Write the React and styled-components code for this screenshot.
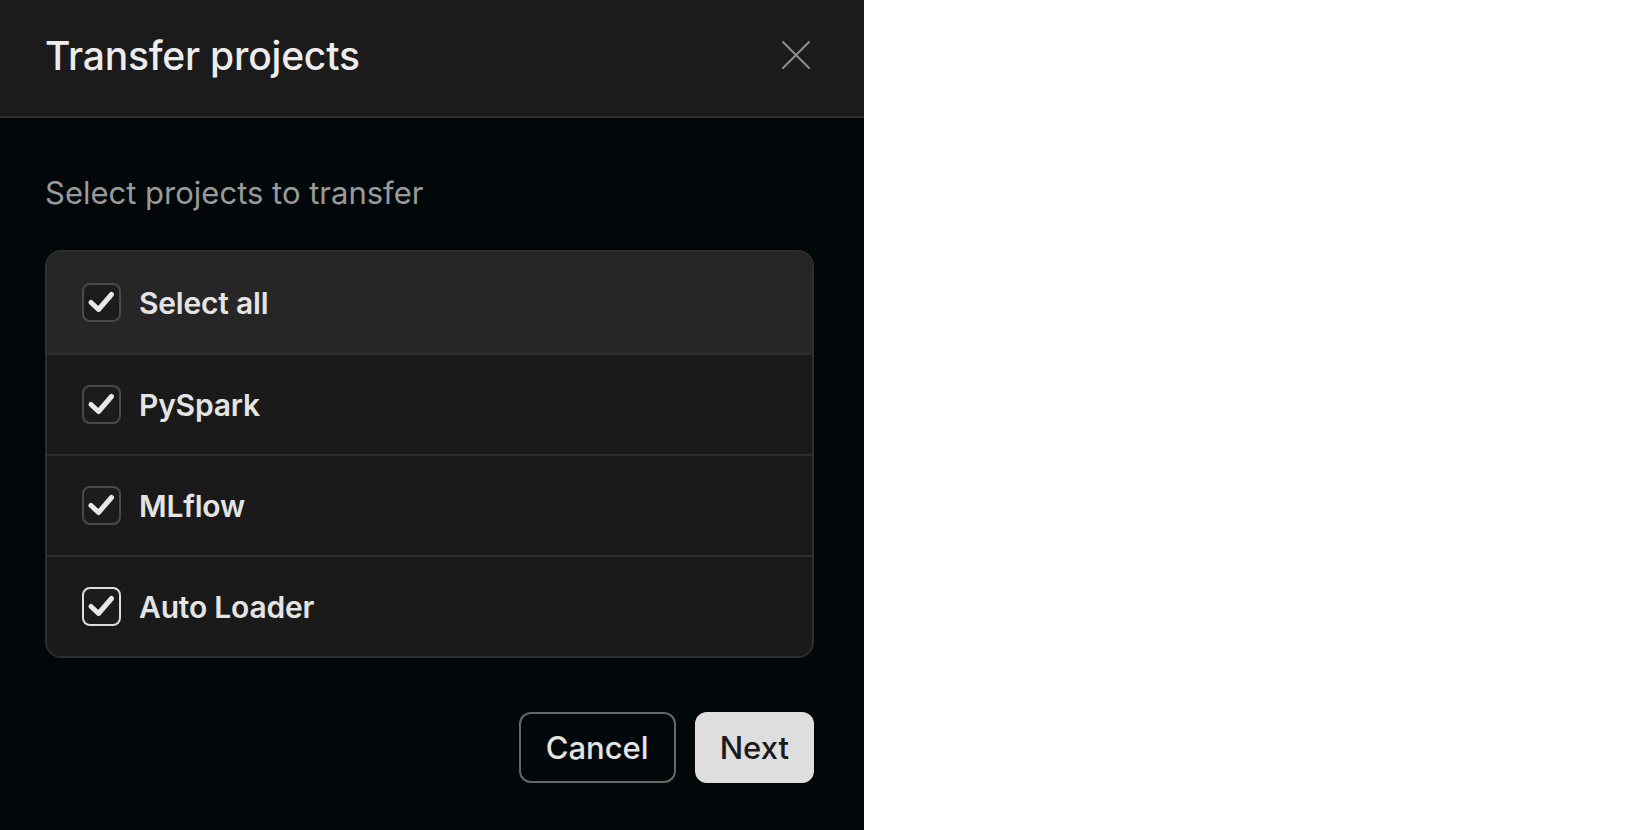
import React, { useState } from 'react'
import styled, { createGlobalStyle } from 'styled-components'

const GlobalStyle = createGlobalStyle`
  html, body {
    margin: 0;
    padding: 0;
    background: #ffffff;
    font-family: Inter, "Noto Sans", "Liberation Sans", sans-serif;
  }
`

const Panel = styled.div`
  display: flex;
  flex-direction: column;
  width: 864px;
  height: 830px;
  background: #020809;
  color: #e6e6e6;
`

const Header = styled.div`
  display: flex;
  align-items: center;
  justify-content: space-between;
  box-sizing: border-box;
  height: 118px;
  padding: 0 50px 6px 45px;
  background: #1b1b1b;
  border-bottom: 2px solid #303030;
`

const Title = styled.h1`
  margin: 0;
  font-size: 39px;
  font-weight: 500;
  color: #ececec;
  letter-spacing: -0.2px;
`

const CloseButton = styled.button`
  display: flex;
  align-items: center;
  justify-content: center;
  width: 32px;
  height: 32px;
  padding: 0;
  margin-right: 2px;
  background: none;
  border: none;
  cursor: pointer;
`

const Body = styled.div`
  display: flex;
  flex-direction: column;
  padding: 57px 50px 0 45px;
`

const Subtitle = styled.p`
  margin: 0 0 39px;
  font-size: 31px;
  line-height: 36px;
  color: #9a9a9a;
`

const List = styled.div`
  display: flex;
  flex-direction: column;
  border: 2px solid #2e2e2e;
  border-radius: 16px;
  overflow: hidden;
  background: #1a1a1a;
`

const Row = styled.label`
  display: flex;
  align-items: center;
  gap: 18px;
  height: ${({ $first }) => ($first ? 101 : 99)}px;
  padding-left: 35px;
  background: ${({ $first }) => ($first ? '#262626' : '#1a1a1a')};
  cursor: pointer;

  & + & {
    border-top: 2px solid #2e2e2e;
  }
`

const Box = styled.span`
  display: flex;
  align-items: center;
  justify-content: center;
  box-sizing: border-box;
  width: 39px;
  height: 39px;
  border-radius: 8px;
  border: 2px solid ${({ $focus }) => ($focus ? '#dcdcdc' : '#4a4a4a')};
  background: #1c1c1c;
`

const Label = styled.span`
  font-size: 30px;
  font-weight: 600;
  color: #e4e4e4;
  letter-spacing: -0.2px;
`

const Actions = styled.div`
  display: flex;
  justify-content: flex-end;
  gap: 19px;
  margin-top: 54px;
`

const Button = styled.button`
  height: 71px;
  padding: 0 ${({ $primary }) => ($primary ? 23 : 25)}px;
  border-radius: 12px;
  font-family: inherit;
  font-size: 31px;
  font-weight: 500;
  cursor: pointer;
  border: 2px solid ${({ $primary }) => ($primary ? '#dedede' : '#666666')};
  background: ${({ $primary }) => ($primary ? '#dedede' : 'transparent')};
  color: ${({ $primary }) => ($primary ? '#1a1a1a' : '#e4e4e4')};
`

const CheckIcon = () => (
  <svg width="39" height="39" viewBox="0 0 39 39" style={{ margin: -2 }}>
    <polyline
      points="9,19.5 16.5,26.5 29.5,11.5"
      fill="none"
      stroke="#e8e8e8"
      strokeWidth="5"
      strokeLinecap="round"
      strokeLinejoin="round"
    />
  </svg>
)

const CloseIcon = () => (
  <svg width="30" height="30" viewBox="0 0 30 30">
    <path d="M2 2 L28 28 M28 2 L2 28" stroke="#8c8c8c" strokeWidth="2" strokeLinecap="round" />
  </svg>
)

const projects = ['PySpark', 'MLflow', 'Auto Loader']

const App = () => {
  const [checked] = useState(true)

  return (
    <>
      <GlobalStyle />
      <Panel>
        <Header>
          <Title>Transfer projects</Title>
          <CloseButton aria-label="Close">
            <CloseIcon />
          </CloseButton>
        </Header>

        <Body>
          <Subtitle>Select projects to transfer</Subtitle>

          <List>
            <Row $first>
              <Box>{checked && <CheckIcon />}</Box>
              <Label>Select all</Label>
            </Row>
            {projects.map((name, i) => (
              <Row key={name}>
                <Box $focus={i === projects.length - 1}>{checked && <CheckIcon />}</Box>
                <Label>{name}</Label>
              </Row>
            ))}
          </List>

          <Actions>
            <Button>Cancel</Button>
            <Button $primary>Next</Button>
          </Actions>
        </Body>
      </Panel>
    </>
  )
}

export default App
